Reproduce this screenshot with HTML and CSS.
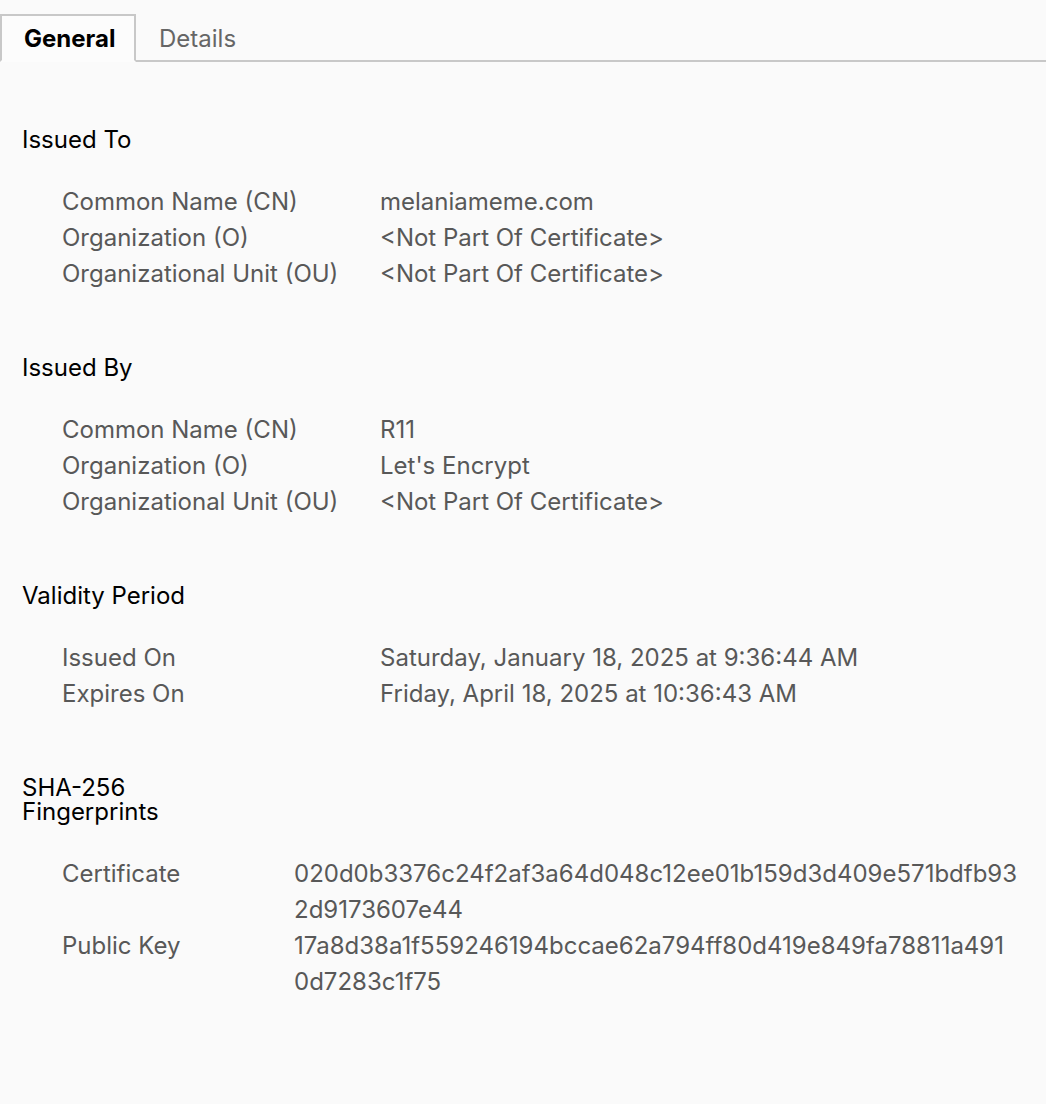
FILE: index.html
```html
<!DOCTYPE html>
<html lang="en">
<head>
<meta charset="utf-8">
<title>Certificate</title>
<link rel="stylesheet" href="styles.css">
</head>
<body>
<div class="tabs">
  <div class="tab active">General</div>
  <div class="tab">Details</div>
  <div class="tab-fill"></div>
</div>
<main class="content">
  <section class="section">
    <h2 class="heading">Issued To</h2>
    <div class="rows wide">
      <div class="label">Common Name (CN)</div><div class="value">melaniameme.com</div>
      <div class="label">Organization (O)</div><div class="value">&lt;Not Part Of Certificate&gt;</div>
      <div class="label">Organizational Unit (OU)</div><div class="value">&lt;Not Part Of Certificate&gt;</div>
    </div>
  </section>
  <section class="section">
    <h2 class="heading">Issued By</h2>
    <div class="rows wide">
      <div class="label">Common Name (CN)</div><div class="value">R11</div>
      <div class="label">Organization (O)</div><div class="value">Let's Encrypt</div>
      <div class="label">Organizational Unit (OU)</div><div class="value">&lt;Not Part Of Certificate&gt;</div>
    </div>
  </section>
  <section class="section">
    <h2 class="heading">Validity Period</h2>
    <div class="rows wide">
      <div class="label">Issued On</div><div class="value">Saturday, January 18, 2025 at 9:36:44 AM</div>
      <div class="label">Expires On</div><div class="value">Friday, April 18, 2025 at 10:36:43 AM</div>
    </div>
  </section>
  <section class="section">
    <h2 class="heading narrow">SHA-256 Fingerprints</h2>
    <div class="rows fp">
      <div class="label">Certificate</div>
      <div class="value"><span class="line">020d0b3376c24f2af3a64d048c12ee01b159d3d409e571bdfb93</span><span class="line">2d9173607e44</span></div>
      <div class="label">Public Key</div>
      <div class="value"><span class="line">17a8d38a1f559246194bccae62a794ff80d419e849fa78811a491</span><span class="line">0d7283c1f75</span></div>
    </div>
  </section>
</main>
</body>
</html>
```

FILE: styles.css
```css
html, body {
  margin: 0;
  padding: 0;
  background: #fafafa;
}
body {
  font-family: "Inter", "Liberation Sans", sans-serif;
  font-size: 24px;
  color: #000;
  width: 1046px;
  height: 1104px;
  overflow: hidden;
}
.tabs {
  display: flex;
  margin-top: 14px;
  height: 48px;
}
.tab {
  box-sizing: border-box;
  height: 48px;
  line-height: 46px;
  padding: 0 23px;
  color: #666;
  border-top: 2px solid transparent;
  border-bottom: 2px solid #c8c8c8;
}
.tab.active {
  width: 136px;
  padding: 0 0 0 22px;
  color: #000;
  font-weight: 700;
  background: #fcfcfc;
  border: 2px solid #c8c8c8;
  border-bottom: 2px solid transparent;
}
.tab-fill {
  flex: 1;
  border-bottom: 2px solid #c8c8c8;
}
.content {
  padding: 66px 0 0 22px;
}
.section {
  margin-bottom: 64px;
}
.heading {
  margin: 0 0 32px;
  font-size: 24px;
  font-weight: 400;
  line-height: 24px;
  color: #000;
}
.heading.narrow {
  max-width: 200px;
}
.rows {
  display: grid;
  padding-left: 40px;
  line-height: 36px;
  color: #585858;
}
.rows.wide {
  grid-template-columns: 318px 1fr;
}
.rows.fp {
  grid-template-columns: 232px 1fr;
}
.line {
  display: block;
  white-space: nowrap;
}
```
